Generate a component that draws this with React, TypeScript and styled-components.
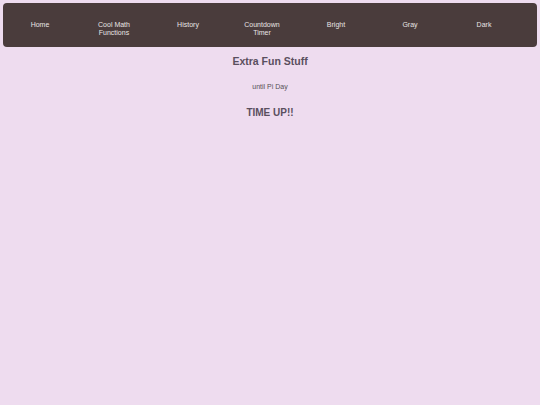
import React from "react";
import styled, { createGlobalStyle } from "styled-components";

const Global = createGlobalStyle`
  html, body { margin: 0; padding: 0; }
  body {
    background: #eedcef;
    font-family: "Liberation Sans", Arial, sans-serif;
    min-height: 405px;
  }
`;

const Page = styled.div`
  padding: 3px;
  display: flex;
  flex-direction: column;
  align-items: stretch;
`;

const Nav = styled.nav`
  height: 44px;
  box-sizing: border-box;
  background: #4a3c3c;
  border-radius: 4px;
  display: flex;
  align-items: flex-start;
  padding-top: 18px;
`;

const NavItem = styled.a`
  width: 74px;
  flex: none;
  text-align: center;
  color: #e8e4e4;
  font-size: 7px;
  line-height: 8px;
  text-decoration: none;
`;

const Main = styled.main`
  display: flex;
  flex-direction: column;
  align-items: center;
`;

const Title = styled.h2`
  margin: 8px 0 0;
  font-size: 10.5px;
  line-height: 12px;
  font-weight: bold;
  color: #5a4f5e;
`;

const Sub = styled.p`
  margin: 16px 0 0;
  font-size: 7px;
  line-height: 8px;
  color: #555055;
`;

const Big = styled.h3`
  margin: 16px 0 0;
  font-size: 10px;
  line-height: 12px;
  font-weight: bold;
  color: #5a4f5e;
`;

const items = [
  ["Home"],
  ["Cool Math", "Functions"],
  ["History"],
  ["Countdown", "Timer"],
  ["Bright"],
  ["Gray"],
  ["Dark"],
];

export default function App() {
  return (
    <>
      <Global />
      <Page>
        <Nav>
          {items.map((lines, i) => (
            <NavItem key={i} href="#">
              {lines.map((l, j) => (
                <React.Fragment key={j}>
                  {j > 0 && <br />}
                  {l}
                </React.Fragment>
              ))}
            </NavItem>
          ))}
        </Nav>
        <Main>
          <Title>Extra Fun Stuff</Title>
          <Sub>until Pi Day</Sub>
          <Big>TIME UP!!</Big>
        </Main>
      </Page>
    </>
  );
}
